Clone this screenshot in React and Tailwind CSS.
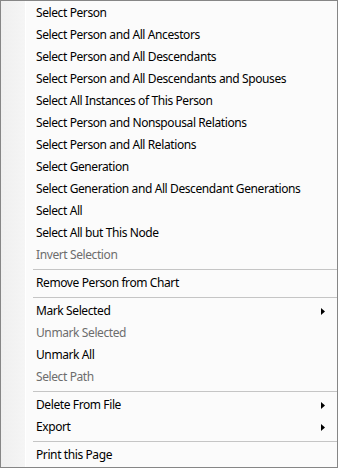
import React from "react";

const items = [
  { label: "Select Person" },
  { label: "Select Person and All Ancestors" },
  { label: "Select Person and All Descendants" },
  { label: "Select Person and All Descendants and Spouses" },
  { label: "Select All Instances of This Person" },
  { label: "Select Person and Nonspousal Relations" },
  { label: "Select Person and All Relations" },
  { label: "Select Generation" },
  { label: "Select Generation and All Descendant Generations" },
  { label: "Select All" },
  { label: "Select All but This Node" },
  { label: "Invert Selection", disabled: true },
  { sep: true },
  { label: "Remove Person from Chart" },
  { sep: true },
  { label: "Mark Selected", sub: true },
  { label: "Unmark Selected", disabled: true },
  { label: "Unmark All" },
  { label: "Select Path", disabled: true },
  { sep: true },
  { label: "Delete From File", sub: true },
  { label: "Export", sub: true },
  { sep: true },
  { label: "Print this Page" },
];

const Arrow = () => (
  <svg width="4" height="7" viewBox="0 0 4 7" className="block">
    <path d="M0 0 L4 3.5 L0 7 Z" fill="#000" />
  </svg>
);

export default function App() {
  return (
    <div
      className="w-[338px] h-[468px] border border-[#868686] bg-[#fbfbfb] relative flex flex-col py-px"
      style={{ fontFamily: '"Noto Sans", "Open Sans", sans-serif' }}
    >
      {/* icon gutter */}
      <div className="absolute left-0 top-0 bottom-0 w-[25px] bg-gradient-to-r from-[#efefef] to-[#f5f5f5] border-r border-white" />
      {items.map((it, i) =>
        it.sep ? (
          <div key={i} className="h-[6px] flex items-center pl-[32px] relative">
            <div className="h-px w-full bg-[#c5c5c5]" />
          </div>
        ) : (
          <div
            key={i}
            className={`h-[22px] flex items-center pl-[35px] pr-[12px] text-[12px] tracking-[-0.4px] relative ${
              it.disabled ? "text-[#6d6d6d]" : "text-black"
            }`}
          >
            <span className="flex-1 leading-none">{it.label}</span>
            {it.sub && <Arrow />}
          </div>
        )
      )}
    </div>
  );
}
